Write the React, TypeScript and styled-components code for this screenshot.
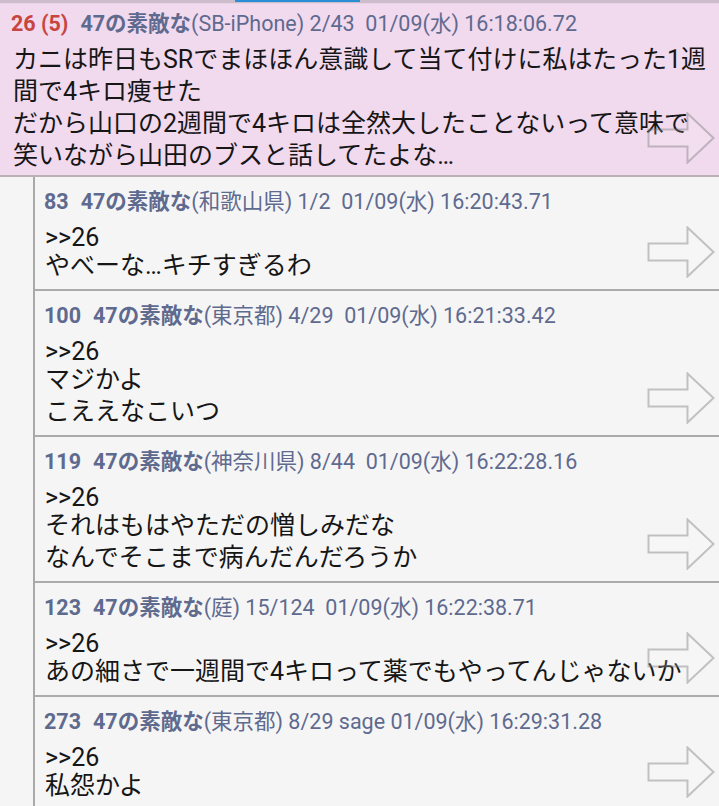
import styled, { createGlobalStyle } from "styled-components";

const GlobalStyle = createGlobalStyle`
  html, body {
    margin: 0;
    padding: 0;
    background: #f5f5f5;
    font-family: Roboto, "Noto Sans CJK JP", "Noto Sans", sans-serif;
  }
`;

const Page = styled.div`
  width: 719px;
  height: 806px;
  overflow: hidden;
  background: #f5f5f5;
`;

const TopBar = styled.div`
  height: 4px;
  background: #cdbccb;
  border-bottom: 1px solid #e8d2e5;
  box-sizing: border-box;
`;

const TabIndicator = styled.div`
  margin-left: 235px;
  width: 125px;
  height: 2px;
  background: #2b8fd6;
`;

const Post = styled.section<{ $root?: boolean }>`
  position: relative;
  background: ${(p) => (p.$root ? "#f1d9ee" : "#f5f5f5")};
  padding: ${(p) => (p.$root ? "4px 10px 3px 11px" : "9px 10px 7px 9px")};
  border-bottom: 2px solid ${(p) => (p.$root ? "#b9b0b8" : "#ababab")};
`;

const Header = styled.div<{ $root?: boolean }>`
  font-size: 21.5px;
  line-height: 32px;
  color: #5f6a8f;
  white-space: pre;
  margin-bottom: ${(p) => (p.$root ? "4px" : "0")};
`;

const Num = styled.span<{ $red?: boolean }>`
  font-weight: 700;
  color: ${(p) => (p.$red ? "#c8453e" : "#5f6a8f")};
  margin-right: 12px;
`;

const Name = styled.span`
  font-weight: 700;
`;

const Body = styled.div<{ $root?: boolean }>`
  font-size: 25px;
  line-height: 32px;
  color: #161616;
  padding-left: ${(p) => (p.$root ? "2px" : "1px")};
`;

const Line = styled.div`
  white-space: nowrap;
`;

const Anchor = styled.div`
  white-space: nowrap;
  padding-top: 8px;
  line-height: 24px;
`;

const Replies = styled.div`
  margin-left: 33px;
  border-left: 2px solid #a9a9a9;
`;

const ArrowWrap = styled.div`
  position: absolute;
  right: 4px;
  bottom: 11px;
  width: 68px;
  height: 52px;
`;

function ArrowIcon() {
  return (
    <ArrowWrap>
      <svg width="68" height="52" viewBox="0 0 68 52">
        <path
          d="M1.5 17.5 H40.5 V1.5 L66.5 26 L40.5 50.5 V34.5 H1.5 Z"
          fill="rgba(255,255,255,0.15)"
          stroke="rgba(120,120,120,0.42)"
          strokeWidth="2"
          strokeLinejoin="miter"
        />
      </svg>
    </ArrowWrap>
  );
}

type Reply = { num: string; info: string; lines: string[] };

const replies: Reply[] = [
  {
    num: "83",
    info: "(和歌山県) 1/2  01/09(水) 16:20:43.71",
    lines: ["やべーな…キチすぎるわ"],
  },
  {
    num: "100",
    info: "(東京都) 4/29  01/09(水) 16:21:33.42",
    lines: ["マジかよ", "こええなこいつ"],
  },
  {
    num: "119",
    info: "(神奈川県) 8/44  01/09(水) 16:22:28.16",
    lines: ["それはもはやただの憎しみだな", "なんでそこまで病んだんだろうか"],
  },
  {
    num: "123",
    info: "(庭) 15/124  01/09(水) 16:22:38.71",
    lines: ["あの細さで一週間で4キロって薬でもやってんじゃないか"],
  },
  {
    num: "273",
    info: "(東京都) 8/29 sage 01/09(水) 16:29:31.28",
    lines: ["私怨かよ"],
  },
];

export default function App() {
  return (
    <Page>
      <GlobalStyle />
      <TopBar>
        <TabIndicator />
      </TopBar>
      <Post $root>
        <Header $root>
          <Num $red>26 (5)</Num>
          <Name>47の素敵な</Name>
          {"(SB-iPhone) 2/43  01/09(水) 16:18:06.72"}
        </Header>
        <Body $root>
          <Line>カニは昨日もSRでまほほん意識して当て付けに私はたった1週</Line>
          <Line>間で4キロ痩せた</Line>
          <Line>だから山口の2週間で4キロは全然大したことないって意味で</Line>
          <Line>笑いながら山田のブスと話してたよな…</Line>
        </Body>
        <ArrowIcon />
      </Post>
      <Replies>
        {replies.map((r) => (
          <Post key={r.num}>
            <Header>
              <Num>{r.num}</Num>
              <Name>47の素敵な</Name>
              {r.info}
            </Header>
            <Body>
              <Anchor>&gt;&gt;26</Anchor>
              {r.lines.map((l, i) => (
                <Line key={i}>{l}</Line>
              ))}
            </Body>
            <ArrowIcon />
          </Post>
        ))}
      </Replies>
    </Page>
  );
}
